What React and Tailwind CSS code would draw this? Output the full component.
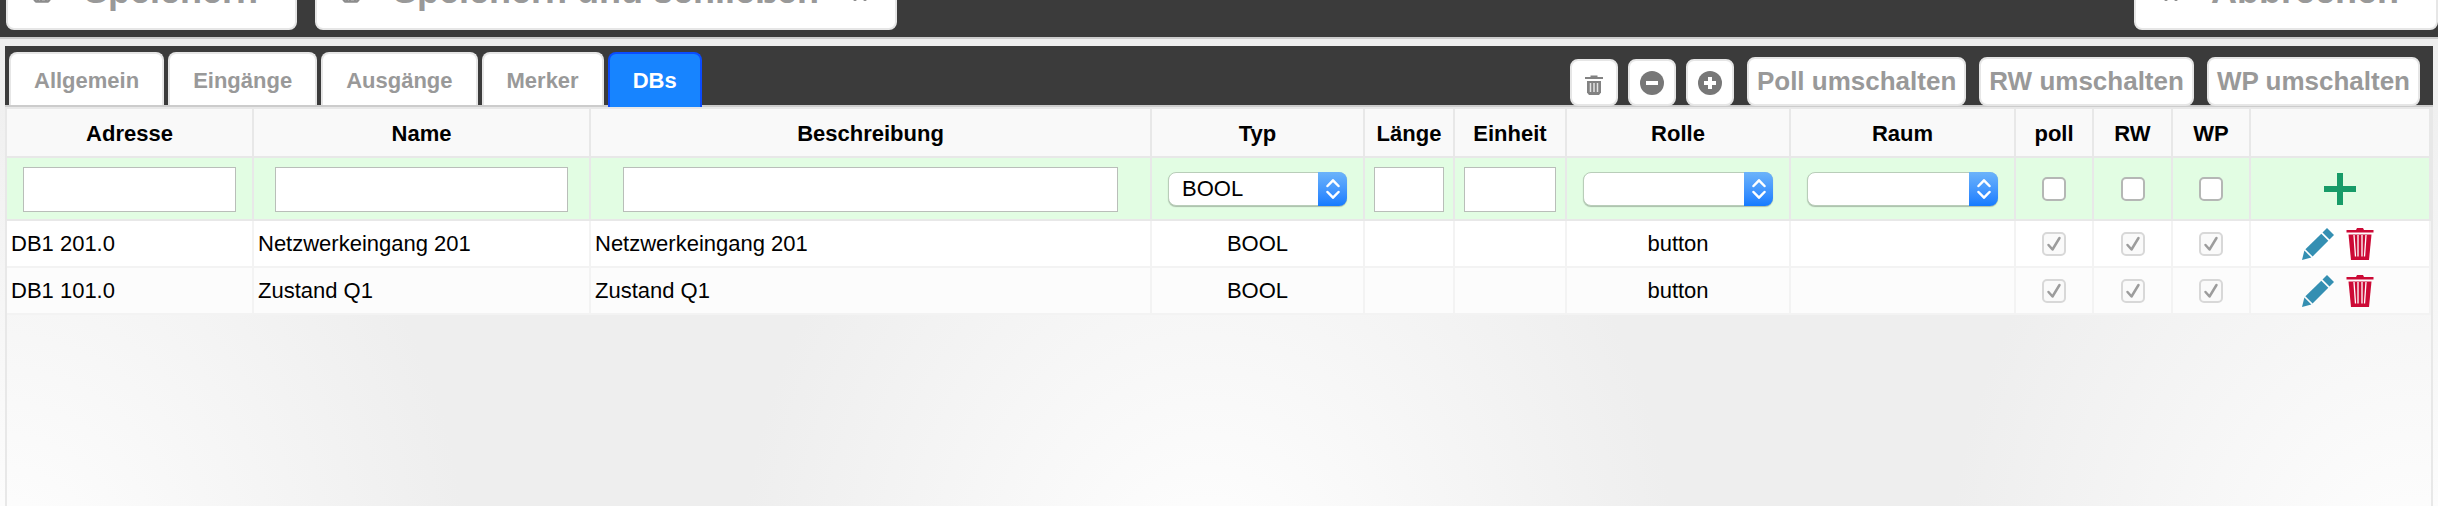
import React, { useState } from "react";

const tabs = ["Allgemein", "Eingänge", "Ausgänge", "Merker", "DBs"];

const columns = [
  { label: "Adresse", width: "w-[247px]" },
  { label: "Name", width: "w-[337px]" },
  { label: "Beschreibung", width: "w-[561px]" },
  { label: "Typ", width: "w-[213px]" },
  { label: "Länge", width: "w-[90px]" },
  { label: "Einheit", width: "w-[112px]" },
  { label: "Rolle", width: "w-[224px]" },
  { label: "Raum", width: "w-[225px]" },
  { label: "poll", width: "w-[78px]" },
  { label: "RW", width: "w-[79px]" },
  { label: "WP", width: "w-[78px]" },
  { label: "", width: "w-[180px]" },
];

const initialRows = [
  {
    address: "DB1 201.0",
    name: "Netzwerkeingang 201",
    description: "Netzwerkeingang 201",
    type: "BOOL",
    role: "button",
  },
  {
    address: "DB1 101.0",
    name: "Zustand Q1",
    description: "Zustand Q1",
    type: "BOOL",
    role: "button",
  },
];

function DiskIcon() {
  return (
    <svg
      className="mb-2 h-5 w-5"
      viewBox="0 0 20 20"
      fill="none"
      stroke="#8c8c8c"
    >
      <path
        d="M2 2h13l3 3v11l-2 2.500H4l-2-2.500z"
        strokeWidth="2.500"
        strokeLinejoin="round"
      />
      <path d="M6 18v-6h8v6M9 18v-4M6 2v5h7V2" strokeWidth="2" />
    </svg>
  );
}

function CloseIcon() {
  return (
    <svg className="mb-2 h-4 w-4" viewBox="0 0 16 16" stroke="#8c8c8c">
      <path d="M3 2l10 10M13 2L3 12" strokeWidth="4" strokeLinecap="round" />
    </svg>
  );
}

function SmallTrashIcon() {
  return (
    <svg className="mt-1 h-5 w-5" viewBox="0 0 20 20">
      <path d="M1 2h5.500V.500h7V2H19v2H1z" fill="#828282" />
      <path d="M3 6h14v11.500L15 20H5l-2-2.500z" fill="#828282" />
      <path d="M6.500 8v9M10 8v9M13.500 8v9" stroke="#e4e4e4" strokeWidth="1.500" />
    </svg>
  );
}

function RoundIcon({ plus }) {
  return (
    <svg className="h-6 w-6" viewBox="0 0 24 24">
      <circle cx="12" cy="12" r="12" fill="#777" />
      {plus ? (
        <path d="M10 6h4v4h4v4h-4v4h-4v-4H6v-4h4z" fill="#fff" />
      ) : (
        <path d="M6 10h12v4H6z" fill="#fff" />
      )}
    </svg>
  );
}

function PlusIcon() {
  return (
    <svg className="h-8 w-8" viewBox="0 0 32 32">
      <path d="M13 0h6v13h13v6H19v13h-6V19H0v-6h13z" fill="#179b68" />
    </svg>
  );
}

function PencilIcon() {
  return (
    <svg className="h-8 w-8" viewBox="0 0 32 32" fill="#348fb2">
      <path d="M25 0l7 7-4.500 4.500-7-7z" />
      <path d="M19.300 5.700l7 7L10.600 28.500l-7.200-7.200z" />
      <path d="M2.400 22.600l7 7L0 32z" />
    </svg>
  );
}

function TrashIcon() {
  return (
    <svg className="h-8 w-7" viewBox="0 0 28 32" fill="#cc0a36">
      <path d="M10 2l1-2h6l1 2h9.500v2.500H.500V2z" />
      <path d="M2.500 6.500h23L23 32H5z" />
      <path
        d="M8 7l1.500 21.500M12 7v21.500M16 7v21.500M20 7l-1.500 21.500"
        stroke="#fff"
        strokeWidth="1.300"
      />
    </svg>
  );
}

function TextField({ label }) {
  return (
    <input
      type="text"
      aria-label={label}
      className="block h-[45px] w-full border border-[#b9beb9] bg-white px-2 text-[22px] outline-none"
    />
  );
}

function SelectField({ label, options }) {
  return (
    <div className="relative">
      <select
        aria-label={label}
        className="block h-[34px] w-full appearance-none rounded-lg border border-[#b9cdb9] bg-white pr-8 pl-[13px] text-[22px] leading-8 shadow-[0_1px_1px_rgba(0,0,0,0.25)] outline-none"
      >
        {options.map((option) => (
          <option key={option}>{option}</option>
        ))}
      </select>
      <span className="pointer-events-none absolute top-0 right-0 flex h-[34px] w-[29px] items-center justify-center rounded-r-lg bg-gradient-to-b from-[#6cb3fa] to-[#147bff]">
        <svg
          className="h-5 w-[14px]"
          viewBox="0 0 14 20"
          fill="none"
          stroke="#fff"
          strokeWidth="2.500"
          strokeLinecap="round"
          strokeLinejoin="round"
        >
          <path d="M1.500 7L7 1.300 12.500 7M1.500 13L7 18.700 12.500 13" />
        </svg>
      </span>
    </div>
  );
}

function CheckField({ label, locked }) {
  if (locked) {
    return (
      <div className="relative mx-auto h-6 w-6">
        <input
          type="checkbox"
          aria-label={label}
          defaultChecked
          disabled
          className="block h-6 w-6 appearance-none rounded-[5px] border-2 border-[#d8d8d8] bg-[#fafafa]"
        />
        <svg
          className="pointer-events-none absolute inset-0 h-6 w-6"
          viewBox="0 0 24 24"
          fill="none"
          stroke="#9c9c9c"
          strokeWidth="2.500"
          strokeLinecap="round"
          strokeLinejoin="round"
        >
          <path d="M6.500 13l4 4.500L17.500 6" />
        </svg>
      </div>
    );
  }
  return (
    <input
      type="checkbox"
      aria-label={label}
      className="mx-auto block h-6 w-6 appearance-none rounded-[5px] border-2 border-[#b5b7b5] bg-white checked:bg-[#147bff]"
    />
  );
}

function DialogButton({ className, children }) {
  return (
    <button
      type="button"
      className={`flex h-20 items-end rounded-lg border-2 border-[#e6e6e6] bg-white pb-[17px] text-[36px] leading-10 font-bold text-[#999] ${className}`}
    >
      {children}
    </button>
  );
}

function ToolButton({ label, children }) {
  return (
    <button
      type="button"
      aria-label={label}
      className="flex h-[47px] w-12 items-center justify-center rounded-lg border-2 border-[#e6e6e6] bg-white"
    >
      {children}
    </button>
  );
}

function ToggleButton({ children }) {
  return (
    <button
      type="button"
      className="h-[49px] rounded-lg border-2 border-[#e6e6e6] bg-white px-2 text-[26px] leading-[45px] font-bold text-[#999]"
    >
      {children}
    </button>
  );
}

export default function App() {
  const [activeTab, setActiveTab] = useState("DBs");
  const [rows, setRows] = useState(initialRows);

  const removeRow = (address) =>
    setRows(rows.filter((row) => row.address !== address));

  const filterCell = "border-r-2 border-b-2 border-[#e8e8e8]";
  const dataCell = "border-r-2 border-b-2 border-[#f3f3f3]";

  return (
    <div className="flex min-h-screen flex-col bg-[#eee] bg-[radial-gradient(470px_560px_at_604px_600px,#fff,#eee)] bg-[length:1208px_100%] bg-[position:-604px_0] bg-repeat-x font-['Liberation_Sans',Arial,sans-serif] text-black">
      {/* Dialog buttons */}
      <header className="flex h-[39px] shrink-0 items-end justify-between overflow-hidden border-b-2 border-[#ccc] bg-[#3b3b3b] pb-[7px] pl-1.5">
        <div className="flex gap-[18px]">
          <DialogButton className="w-[291px] gap-8 pl-6">
            <DiskIcon />
            Speichern
          </DialogButton>
          <DialogButton className="w-[582px] gap-8 pr-[27px] pl-6">
            <DiskIcon />
            <span className="flex-1 text-left">Speichern und schließen</span>
            <CloseIcon />
          </DialogButton>
        </div>
        <DialogButton className="w-[304px] gap-8 pl-[27px]">
          <CloseIcon />
          Abbrechen
        </DialogButton>
      </header>

      <main className="mx-[5px] mt-[7px] flex flex-1 flex-col">
        {/* Tabs and tools */}
        <div className="flex h-[61px] items-end justify-between border-b-2 border-[#ccc] bg-[#3b3b3b] pr-[13px] pl-1">
          <div role="tablist" className="flex gap-1">
            {tabs.map((tab) => (
              <button
                key={tab}
                type="button"
                role="tab"
                aria-selected={tab === activeTab}
                onClick={() => setActiveTab(tab)}
                className={`rounded-t-lg border-2 border-b-0 px-[23px] pt-0.5 text-[22px] leading-[49px] font-bold ${
                  tab === activeTab
                    ? "-mb-0.5 border-[#0a4cff] bg-[#1784ff] pb-0.5 text-white"
                    : "border-[#e6e6e6] bg-white text-[#999]"
                }`}
              >
                {tab}
              </button>
            ))}
          </div>
          <div className="-mb-px flex items-end gap-[13px]">
            <div className="flex gap-[10px]">
              <ToolButton label="Alle löschen">
                <SmallTrashIcon />
              </ToolButton>
              <ToolButton label="Entfernen">
                <RoundIcon />
              </ToolButton>
              <ToolButton label="Hinzufügen">
                <RoundIcon plus />
              </ToolButton>
            </div>
            <ToggleButton>Poll umschalten</ToggleButton>
            <ToggleButton>RW umschalten</ToggleButton>
            <ToggleButton>WP umschalten</ToggleButton>
          </div>
        </div>

        {/* Data blocks */}
        <div className="flex-1 border-x-2 border-[#e8e8e8]">
          <table className="w-full table-fixed border-separate border-spacing-0 border-t-2 border-[#e8e8e8] text-[22px] leading-7">
            <thead>
              <tr className="h-[49px] bg-[#f9f9f9]">
                {columns.map((column) => (
                  <th
                    key={column.label}
                    className={`border-r-2 border-b-2 border-[#e8e8e8] p-0 pt-0.5 font-bold ${column.width}`}
                  >
                    {column.label}
                  </th>
                ))}
              </tr>
            </thead>
            <tbody>
              <tr className="h-[63px] bg-[#e2fde3]">
                <td className={`${filterCell} px-4 pt-0.5`}>
                  <TextField label="Adresse" />
                </td>
                <td className={`${filterCell} px-[21px] pt-0.5`}>
                  <TextField label="Name" />
                </td>
                <td className={`${filterCell} px-8 pt-0.5`}>
                  <TextField label="Beschreibung" />
                </td>
                <td className={`${filterCell} px-4`}>
                  <SelectField
                    label="Typ"
                    options={["BOOL", "BYTE", "WORD", "DWORD", "INT", "REAL"]}
                  />
                </td>
                <td className={`${filterCell} px-[9px] pt-0.5`}>
                  <TextField label="Länge" />
                </td>
                <td className={`${filterCell} px-[9px] pt-0.5`}>
                  <TextField label="Einheit" />
                </td>
                <td className={`${filterCell} px-4`}>
                  <SelectField label="Rolle" options={["", "button"]} />
                </td>
                <td className={`${filterCell} px-4`}>
                  <SelectField label="Raum" options={[""]} />
                </td>
                <td className={filterCell}>
                  <CheckField label="poll" />
                </td>
                <td className={filterCell}>
                  <CheckField label="RW" />
                </td>
                <td className={filterCell}>
                  <CheckField label="WP" />
                </td>
                <td className={filterCell}>
                  <button
                    type="button"
                    aria-label="Zeile hinzufügen"
                    className="mx-auto block"
                  >
                    <PlusIcon />
                  </button>
                </td>
              </tr>
              {rows.map((row) => (
                <tr
                  key={row.address}
                  className="h-[47px] odd:bg-[#fcfcfc] even:bg-white"
                >
                  <td className={`${dataCell} pl-1`}>{row.address}</td>
                  <td className={`${dataCell} pl-1`}>{row.name}</td>
                  <td className={`${dataCell} pl-1`}>{row.description}</td>
                  <td className={`${dataCell} text-center`}>{row.type}</td>
                  <td className={dataCell}></td>
                  <td className={dataCell}></td>
                  <td className={`${dataCell} text-center`}>{row.role}</td>
                  <td className={dataCell}></td>
                  <td className={dataCell}>
                    <CheckField label={`poll ${row.address}`} locked />
                  </td>
                  <td className={dataCell}>
                    <CheckField label={`RW ${row.address}`} locked />
                  </td>
                  <td className={dataCell}>
                    <CheckField label={`WP ${row.address}`} locked />
                  </td>
                  <td className={dataCell}>
                    <div className="flex justify-center gap-3 pr-1">
                      <button type="button" aria-label="Bearbeiten">
                        <PencilIcon />
                      </button>
                      <button
                        type="button"
                        aria-label="Löschen"
                        onClick={() => removeRow(row.address)}
                      >
                        <TrashIcon />
                      </button>
                    </div>
                  </td>
                </tr>
              ))}
            </tbody>
          </table>
        </div>
      </main>
    </div>
  );
}
